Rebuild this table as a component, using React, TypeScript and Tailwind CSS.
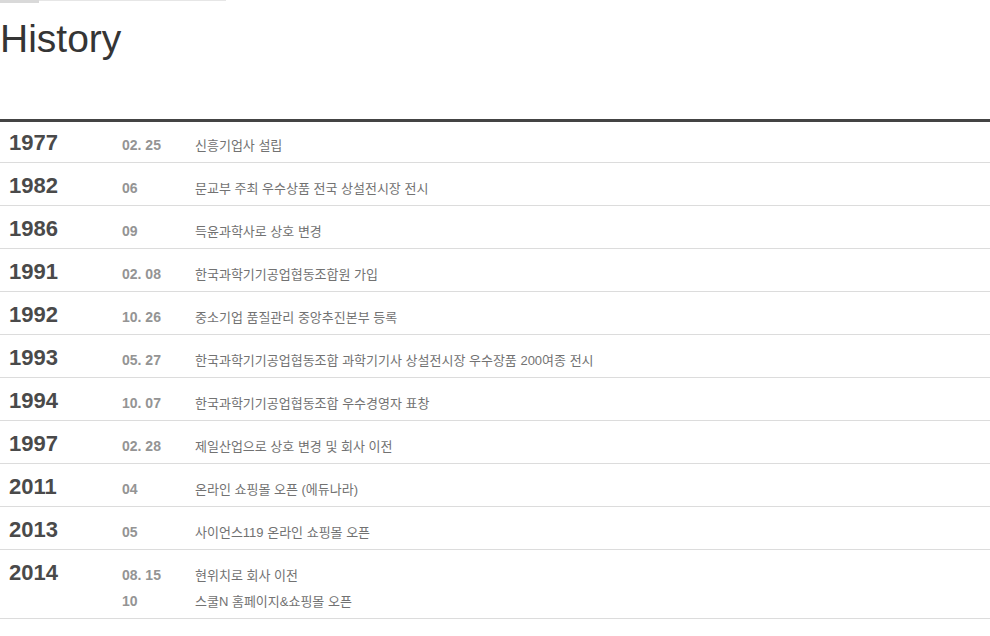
type Item = { date: string; text: string };
type Year = { year: string; items: Item[] };

const history: Year[] = [
  { year: '1977', items: [{ date: '02. 25', text: '신흥기업사 설립' }] },
  { year: '1982', items: [{ date: '06', text: '문교부 주최 우수상품 전국 상설전시장 전시' }] },
  { year: '1986', items: [{ date: '09', text: '득윤과학사로 상호 변경' }] },
  { year: '1991', items: [{ date: '02. 08', text: '한국과학기기공업협동조합원 가입' }] },
  { year: '1992', items: [{ date: '10. 26', text: '중소기업 품질관리 중앙추진본부 등록' }] },
  { year: '1993', items: [{ date: '05. 27', text: '한국과학기기공업협동조합 과학기기사 상설전시장 우수장품 200여종 전시' }] },
  { year: '1994', items: [{ date: '10. 07', text: '한국과학기기공업협동조합 우수경영자 표창' }] },
  { year: '1997', items: [{ date: '02. 28', text: '제일산업으로 상호 변경 및 회사 이전' }] },
  { year: '2011', items: [{ date: '04', text: '온라인 쇼핑몰 오픈 (에듀나라)' }] },
  { year: '2013', items: [{ date: '05', text: '사이언스119 온라인 쇼핑몰 오픈' }] },
  {
    year: '2014',
    items: [
      { date: '08. 15', text: '현위치로 회사 이전' },
      { date: '10', text: '스쿨N 홈페이지&쇼핑몰 오픈' },
    ],
  },
];

export default function App() {
  return (
    <div className="w-[990px] bg-white font-['Liberation_Sans',Arial,sans-serif]">
      {/* cut-off tab line at the very top */}
      <div className="flex items-start">
        <div className="w-[39px] h-[3px] bg-[#d9d9d9]" />
        <div className="w-[187px] h-px bg-[#e6e6e6]" />
      </div>

      <h2 className="mt-[14px] text-[39px] leading-[44px] font-normal text-[#353535]">History</h2>

      <ul className="mt-[58px] border-t-[3px] border-[#444]">
        {history.map((h) => (
          <li key={h.year} className="flex items-start border-b border-[#dcdcdc] pt-[10px] pb-[6px] first:pt-2">
            <div className="w-[122px] h-[26px] shrink-0 pl-[9px] text-[22px] leading-[26px] font-bold text-[#4a4a4a]">
              {h.year}
            </div>
            <div className="flex flex-col">
              {h.items.map((it) => (
                <div key={it.date} className="flex items-baseline h-[26px] pt-[2px] leading-[26px]">
                  <span className="w-[73px] shrink-0 text-[14px] font-bold text-[#949494]">{it.date}</span>
                  <span className="text-[13px] text-[#727272] font-['Liberation_Sans','Noto_Sans_CJK_KR',sans-serif]">
                    {it.text}
                  </span>
                </div>
              ))}
            </div>
          </li>
        ))}
      </ul>
    </div>
  );
}
